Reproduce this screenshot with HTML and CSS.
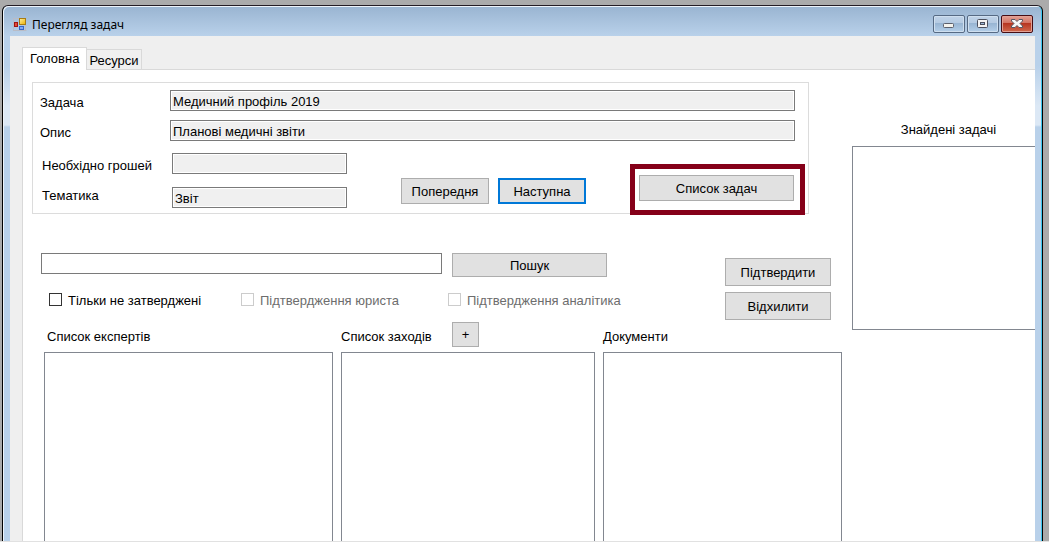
FILE: index.html
```html
<!DOCTYPE html>
<html lang="uk">
<head>
<meta charset="utf-8">
<title>Перегляд задач</title>
<link rel="stylesheet" href="styles.css">
</head>
<body>
<div class="desktop">
  <main class="window">
    <header class="titlebar">
      <svg class="app-icon" width="14" height="14" viewBox="0 0 14 14" aria-hidden="true">
        <defs>
          <linearGradient id="gold" x2="1" y2="1"><stop stop-color="#fff0a0"/><stop offset="1" stop-color="#eab000"/></linearGradient>
        </defs>
        <path d="M.5 0v13M0 .5h6M0 12.500h13.500M12.500 7v6" stroke="#b9bcc6" fill="none"/>
        <rect x="6.500" y=".5" width="6" height="6" fill="url(#gold)" stroke="#a87c14"/>
        <rect x="1.500" y="4.500" width="3" height="4" fill="#e04a3a" stroke="#a01410"/>
        <rect x="6.500" y="8.500" width="4" height="3" fill="#7fa8f4" stroke="#3566c8"/>
      </svg>
      <h1 class="title">Перегляд задач</h1>
      <div class="window-controls">
        <button class="control" type="button" aria-label="Згорнути">
          <svg width="30" height="16" viewBox="0 0 30 16"><rect x="9.500" y="7.500" width="10" height="4" rx="1" fill="#f4f3ee" stroke="#5c606c"/></svg>
        </button>
        <button class="control" type="button" aria-label="Розгорнути">
          <svg width="30" height="16" viewBox="0 0 30 16"><rect x="9.500" y="3.500" width="10" height="8" rx="1" fill="#f4f4f4" stroke="#4c505e"/><rect x="12.500" y="6.500" width="4" height="2" fill="#9cb8d8" stroke="#4c505e"/></svg>
        </button>
        <button class="control control--close" type="button" aria-label="Закрити">
          <svg width="30" height="16" viewBox="0 0 30 16"><path d="M9.500 3.500h3.500l2 2 2-2h3.500v1.500l-2.500 2.500 2.500 2.500v1.500H17l-2-2-2 2H9.500V10L12 7.500 9.500 5z" fill="#f6f6f6" stroke="#555763"/></svg>
        </button>
      </div>
    </header>

    <div class="client">
      <nav class="tabs" role="tablist">
        <button class="tab tab--active" type="button" role="tab" aria-selected="true">Головна</button>
        <button class="tab" type="button" role="tab" aria-selected="false">Ресурси</button>
      </nav>

      <div class="page" role="tabpanel">
        <div class="primary">
          <form class="task">
            <div class="row">
              <label class="label" for="task">Задача</label>
              <input class="field" id="task" value="Медичний профіль 2019" readonly>
            </div>
            <div class="row">
              <label class="label" for="about">Опис</label>
              <input class="field" id="about" value="Планові медичні звіти" readonly>
            </div>
            <div class="task-foot">
              <div class="details">
                <div class="row">
                  <label class="label" for="money">Необхідно грошей</label>
                  <input class="field" id="money" readonly>
                </div>
                <div class="row row--top">
                  <label class="label" for="topic">Тематика</label>
                  <input class="field" id="topic" value="Звіт" readonly>
                </div>
              </div>
              <div class="pager">
                <button class="button" type="button">Попередня</button>
                <button class="button button--default" type="button">Наступна</button>
              </div>
              <div class="marked">
                <button class="button button--wide" type="button">Список задач</button>
              </div>
            </div>
          </form>

          <div class="tools">
            <div class="search">
              <div class="search-line">
                <input class="field field--search" aria-label="Пошук">
                <button class="button button--find" type="button">Пошук</button>
              </div>
              <div class="checks">
                <label class="check"><input class="box" type="checkbox">Тільки не затверджені</label>
                <label class="check check--off"><input class="box" type="checkbox" disabled>Підтвердження юриста</label>
                <label class="check check--off"><input class="box" type="checkbox" disabled>Підтвердження аналітика</label>
              </div>
            </div>
            <div class="decision">
              <button class="button" type="button">Підтвердити</button>
              <button class="button" type="button">Відхилити</button>
            </div>
          </div>

          <div class="lists">
            <section class="list-column">
              <div class="list-head"><label class="list-label" for="experts">Список експертів</label></div>
              <select class="list" id="experts" size="8"></select>
            </section>
            <section class="list-column">
              <div class="list-head">
                <label class="list-label list-label--action" for="events">Список заходів</label>
                <button class="button button--add" type="button">+</button>
              </div>
              <select class="list" id="events" size="8"></select>
            </section>
            <section class="list-column">
              <div class="list-head"><label class="list-label" for="documents">Документи</label></div>
              <select class="list" id="documents" size="8"></select>
            </section>
          </div>
        </div>

        <aside class="found">
          <label class="found-label" for="found">Знайдені задачі</label>
          <select class="list list--found" id="found" size="8"></select>
        </aside>
      </div>
    </div>
  </main>
</div>
</body>
</html>
```
FILE: styles.css
```css
* {
  box-sizing: border-box;
}

body {
  margin: 0;
  height: 100vh;
  padding-bottom: 1px;
  background: #fff;
  font: 13px/16px "Liberation Sans", Arial, sans-serif;
  color: #000;
}

button,
input,
select {
  font: inherit;
  color: inherit;
  border-radius: 0;
}

.desktop {
  display: flex;
  height: 100%;
  padding: 5px 6px 0 2px;
  background: #ababab;
  border-bottom: 1px solid #e1e1e1;
  overflow: hidden;
}

.window {
  flex: 1;
  min-width: 0;
  display: flex;
  flex-direction: column;
  padding: 0 7px;
  border: 1px solid #000;
  border-top-color: #241c24;
  border-bottom: 0;
  border-radius: 6px 6px 0 0;
  background: linear-gradient(#99b4d1 0, #b9d1ea 30px, #b9d1ea 60px, #dce8f5 100px, #dce8f5 119px, #b9d1ea 121px);
  box-shadow: inset 1px 1px 0 #eef4fa, inset -1px 0 0 #3cc8f0;
}

.titlebar {
  display: flex;
  align-items: center;
  height: 30px;
  padding: 0 2px 0 3px;
}

.title {
  flex: 1;
  margin: 8px 0 0 5px;
  font: 12px/16px "Noto Sans", sans-serif;
}

.app-icon {
  flex: none;
  margin-top: 8px;
}

.window-controls {
  display: flex;
  gap: 2px;
  margin-top: 6px;
}

.control {
  display: flex;
  width: 32px;
  height: 18px;
  padding: 0;
  border: 1px solid #566a84;
  border-radius: 2px;
  background: linear-gradient(#c0d3e8 0, #b4cae2 45%, #98b5d3 46%, #b4cfe9 100%);
  box-shadow: inset 0 0 0 1px #cfdfef;
}

.control--close {
  border-color: #460d14;
  background: linear-gradient(#e3a196 0, #d2705f 45%, #b63520 46%, #d0694e 100%);
  box-shadow: inset 0 0 0 1px #e2a195;
}

.client {
  flex: 1;
  min-height: 0;
  display: flex;
  flex-direction: column;
  padding: 11px 0 0 12px;
  background: #efefef;
}

.tabs {
  display: flex;
  align-items: flex-end;
}

.tab {
  height: 20px;
  padding: 2px 2px 0;
  border: 1px solid #d9d9d9;
  border-bottom: 0;
  border-left: 0;
  background: #f0f0f0;
}

.tab--active {
  position: relative;
  height: 23px;
  margin-bottom: -1px;
  padding: 0 7px;
  border-left: 1px solid #d9d9d9;
  background: #fff;
}

.page {
  flex: 1;
  min-height: 0;
  display: flex;
  border: 1px solid #d9d9d9;
  border-width: 1px 0 0 1px;
  background: #fff;
}

.primary {
  flex: 1;
  min-width: 0;
  display: flex;
  flex-direction: column;
  padding: 12px 0 0 9px;
}

.task {
  margin-right: 43px;
  padding: 7px 13px 5px 7px;
  border: 1px solid #dcdcdc;
}

.row {
  display: flex;
  align-items: flex-start;
  margin-bottom: 9px;
}

.label {
  flex: none;
  width: 130px;
  padding-top: 5px;
}

.field {
  flex: 1;
  min-width: 0;
  height: 21px;
  padding: 1px 2px 0;
  border: 1px solid #7a7a7a;
  background: #f0f0f0;
  box-shadow: inset 0 0 0 1px #fff;
  outline: 0;
}

.task-foot {
  display: flex;
  padding-top: 3px;
}

.details {
  width: 307px;
  padding-left: 2px;
}

.details .row {
  margin-bottom: 13px;
}

.details .row:last-child {
  margin-bottom: 0;
}

.row--top .label {
  padding-top: 1px;
}

.button {
  height: 26px;
  padding: 1px 0 0;
  border: 1px solid #adadad;
  background: #e1e1e1;
}

.button--default {
  border: 2px solid #0078d7;
}

.pager {
  display: grid;
  grid-template-columns: 88px 88px;
  align-content: start;
  gap: 9px;
  margin-left: 54px;
  padding-top: 25px;
}

.marked {
  position: relative;
  margin: 0 1px 0 auto;
  padding-top: 22px;
}

.marked::after {
  content: "";
  position: absolute;
  inset: 11px -11px -7px -9px;
  border: 5px solid #850019;
  pointer-events: none;
}

.button--wide {
  width: 155px;
}

.tools {
  display: flex;
  justify-content: space-between;
  margin: 39px 21px 0 9px;
}

.search-line {
  display: flex;
  gap: 10px;
}

.field--search {
  flex: none;
  width: 401px;
  background: #fff;
}

.button--find {
  width: 155px;
  height: 24px;
}

.checks {
  display: grid;
  grid-template-columns: 192px 207px auto;
  margin-top: 16px;
  padding-left: 8px;
}

.check {
  display: flex;
  align-items: flex-start;
  gap: 6px;
}

.check--off {
  color: #6d6d6d;
}

.box {
  appearance: none;
  width: 13px;
  height: 13px;
  margin: 0;
  border: 1px solid #333;
  background: #fff;
}

.box:disabled {
  border-color: #ccc;
}

.decision {
  display: grid;
  grid-template-columns: 106px;
  gap: 6px;
  padding-top: 5px;
}

.decision .button {
  height: 28px;
}

.lists {
  flex: 1;
  min-height: 0;
  display: grid;
  grid-template-columns: 289fr 254fr 239fr;
  gap: 8px;
  margin: 2px 10px 0 12px;
}

.list-column {
  display: flex;
  flex-direction: column;
  min-width: 0;
}

.list-head {
  display: flex;
  height: 25px;
  margin-bottom: 5px;
}

.list-label {
  padding: 7px 0 0 3px;
}

.list-label--action {
  width: 111px;
  padding-left: 0;
}

.list-column:last-child .list-label {
  padding-left: 0;
}

.button--add {
  width: 27px;
  height: 25px;
}

.list {
  appearance: none;
  flex: 1;
  width: 100%;
  margin: 0;
  padding: 0;
  border: 1px solid #828790;
  border-bottom: 0;
  background: #fff;
}

.found {
  width: 183px;
  padding-top: 52px;
}

.found-label {
  display: block;
  margin-bottom: 8px;
  padding-left: 10px;
  text-align: center;
}

.list--found {
  display: block;
  height: 184px;
  border-right: 0;
  border-bottom: 1px solid #828790;
}
```
